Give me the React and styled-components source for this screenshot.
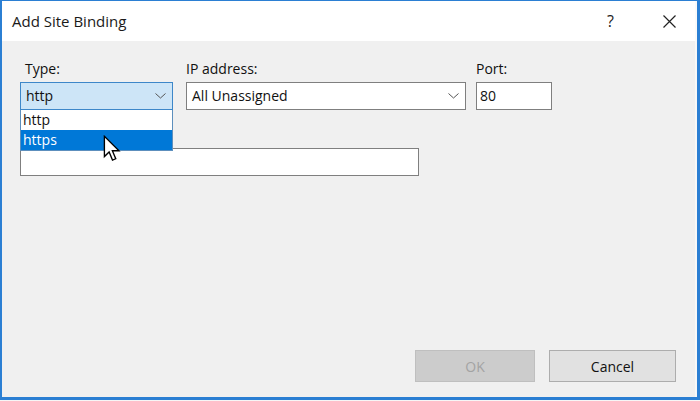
import React from "react";
import styled, { createGlobalStyle } from "styled-components";

const Global = createGlobalStyle`
  html, body { margin: 0; padding: 0; background: #f6f6f6; }
  body { font-family: "Open Sans", "Noto Sans", sans-serif; }
  * { box-sizing: border-box; }
`;

const Frame = styled.div`
  width: 700px;
  height: 400px;
  display: flex;
  flex-direction: column;
  border-style: solid;
  border-color: #2b7fd3;
  border-width: 1px 3px 3px 2px;
  background: #f0f0f0;
  position: relative;
  color: #000;
`;

const TitleBar = styled.div`
  height: 40px;
  background: #fff;
  display: flex;
  align-items: center;
  padding-left: 10px;
  border-right: 2px solid #fafafa;
`;

const Title = styled.div`
  flex: 1;
  font-size: 15px;
  color: #1a1a1a;
`;

const TitleButton = styled.div`
  width: ${(p) => p.$w}px;
  height: 40px;
  display: flex;
  align-items: center;
  justify-content: center;
  font-size: 16px;
  color: #222;
`;

const Body = styled.div`
  flex: 1;
  display: flex;
  flex-direction: column;
  padding: 18px 19px 15px 18px;
  border-right: 2px solid #f8f8f8;
`;

const FieldRow = styled.div`
  display: flex;
  align-items: flex-end;
`;

const Field = styled.div`
  display: flex;
  flex-direction: column;
  width: ${(p) => p.$w}px;
  margin-right: ${(p) => p.$mr || 0}px;
  position: relative;
`;

const Label = styled.div`
  font-size: 14px;
  line-height: 20px;
  height: 23px;
  padding-left: ${(p) => p.$pl || 0}px;
  color: #111;
`;

const Box = styled.div`
  height: 28px;
  display: flex;
  align-items: center;
  padding: 0 ${(p) => (p.$combo ? 6 : 3)}px 0 ${(p) => (p.$combo ? 5 : 3)}px;
  background: ${(p) => (p.$active ? "#cde5f7" : "#fff")};
  border: 1px solid ${(p) => (p.$active ? "#3d87c9" : "#7f7f7f")};
  font-size: 14px;
  line-height: 18px;
  color: #111;
`;

const BoxText = styled.span`
  flex: 1;
  margin-top: -1px;
`;

const Chevron = () => (
  <svg width="11" height="6" viewBox="0 0 11 6">
    <path d="M0.5 0.5 L5.5 5 L10.5 0.5" fill="none" stroke="#555" strokeWidth="1" />
  </svg>
);

const HostRow = styled.div`
  display: flex;
  flex-direction: column;
  margin-top: 15px;
  width: 399px;
`;

const List = styled.div`
  position: absolute;
  left: 0;
  right: 0;
  top: 51px;
  background: #fff;
  border: 1px solid #5d8fbd;
  border-top: none;
  z-index: 2;
  display: flex;
  flex-direction: column;
`;

const Option = styled.div`
  height: 20px;
  line-height: 19px;
  padding-left: 2px;
  font-size: 14px;
  background: ${(p) => (p.$sel ? "#0078d7" : "#fff")};
  color: ${(p) => (p.$sel ? "#fff" : "#111")};
`;

const Buttons = styled.div`
  margin-top: auto;
  display: flex;
  justify-content: flex-end;
  gap: 14px;
`;

const Button = styled.div`
  width: ${(p) => p.$w}px;
  height: 32px;
  display: flex;
  align-items: center;
  justify-content: center;
  font-size: 14px;
  background: ${(p) => (p.$disabled ? "#cccccc" : "#e1e1e1")};
  border: 1px solid ${(p) => (p.$disabled ? "#bfbfbf" : "#adadad")};
  color: ${(p) => (p.$disabled ? "#a3a3a3" : "#111")};
`;

const Cursor = styled.svg`
  position: absolute;
  left: 101px;
  top: 134px;
  z-index: 3;
`;

export default function App() {
  return (
    <>
      <Global />
      <Frame>
        <TitleBar>
          <Title>Add Site Binding</Title>
          <TitleButton $w={65}>?</TitleButton>
          <TitleButton $w={52}>
            <svg width="13" height="13" viewBox="0 0 13 13">
              <path d="M0.5 0.5 L12.5 12.5 M12.5 0.5 L0.5 12.5" stroke="#222" strokeWidth="1.2" />
            </svg>
          </TitleButton>
        </TitleBar>
        <Body>
          <FieldRow>
            <Field $w={153} $mr={13}>
              <Label $pl={5}>Type:</Label>
              <Box $combo $active>
                <BoxText>http</BoxText>
                <Chevron />
              </Box>
              <List>
                <Option>http</Option>
                <Option $sel>https</Option>
              </List>
            </Field>
            <Field $w={280} $mr={10}>
              <Label>IP address:</Label>
              <Box $combo>
                <BoxText>All Unassigned</BoxText>
                <Chevron />
              </Box>
            </Field>
            <Field $w={76}>
              <Label>Port:</Label>
              <Box>
                <BoxText>80</BoxText>
              </Box>
            </Field>
          </FieldRow>
          <HostRow>
            <Label $pl={5} />
            <Box />
          </HostRow>
          <Buttons>
            <Button $w={120} $disabled>OK</Button>
            <Button $w={127}>Cancel</Button>
          </Buttons>
        </Body>
        <Cursor width="19" height="27" viewBox="0 0 14 20">
          <path
            d="M1 1 L1 16 L4.5 12.6 L7 18.6 L9.4 17.6 L6.9 11.7 L11.8 11.7 Z"
            fill="#fff"
            stroke="#000"
            strokeWidth="1"
            strokeLinejoin="miter"
          />
        </Cursor>
      </Frame>
    </>
  );
}
